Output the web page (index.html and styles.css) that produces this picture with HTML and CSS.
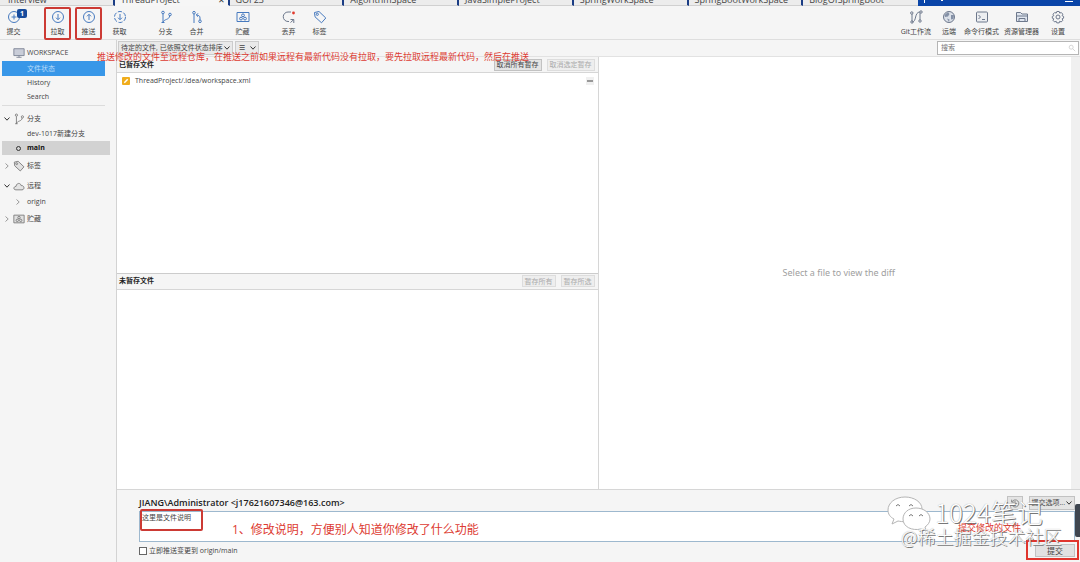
FILE: index.html
```html
<!DOCTYPE html>
<html lang="zh-CN">
<head>
<meta charset="utf-8">
<title>ThreadProject</title>
<link rel="stylesheet" href="styles.css">
</head>
<body>
<svg class="sprite" aria-hidden="true">
  <symbol id="stash" viewBox="0 0 14 12"><path d="M1 1.500h12v9H1z"/><circle cx="7" cy="4.300" r="1.400"/><circle cx="5" cy="7.600" r="1.400"/><circle cx="9" cy="7.600" r="1.400"/></symbol>
  <symbol id="branch" viewBox="0 0 14 14"><circle cx="4" cy="2.500" r="1.300"/><circle cx="11" cy="4.500" r="1.300"/><path d="M4 4v8.500M4 12.500c1-4 6-2 6.700-6.700M2.500 12.500h3"/></symbol>
  <symbol id="tag" viewBox="0 0 14 14"><path d="M1.500 2.500l4.500-1 6.800 6.500-4.300 4.800-6.500-6z"/><circle cx="4.300" cy="4.300" r="1.100"/></symbol>
  <symbol id="chev" viewBox="0 0 8 8"><path d="M1.500 2.500L4 5.200l2.500-2.700"/></symbol>
</svg>

<header>
  <div class="titlebar">
    <nav class="tabs">
      <a class="tab" href="#">Interview</a>
      <a class="tab active" href="#">ThreadProject<span class="close">✕</span></a>
      <a class="tab" href="#">GOF23</a>
      <a class="tab" href="#">AlgorithmSpace</a>
      <a class="tab" href="#">JavaSimpleProject</a>
      <a class="tab" href="#">SpringWorkSpace</a>
      <a class="tab" href="#">SpringBootWorkSpace</a>
      <a class="tab" href="#">BlogOfSpringboot</a>
    </nav>
    <span class="newtab"></span><span class="menumark"></span><span class="minimize"></span>
  </div>
  <div class="toolbar">
    <div class="group">
      <button class="tool first"><svg viewBox="0 0 14 14"><circle cx="7" cy="7" r="5.500"/><path d="M7 4.500v5M4.500 7h5"/></svg>提交<span class="badge">1</span></button>
    </div>
    <div class="group">
      <button class="tool marked"><svg viewBox="0 0 14 14"><circle cx="7" cy="7" r="5.500"/><path d="M7 4v5.500M5 7.700l2 2 2-2"/></svg>拉取</button>
      <button class="tool marked"><svg viewBox="0 0 14 14"><circle cx="7" cy="7" r="5.500"/><path d="M7 10V4.500M5 6.300l2-2 2 2"/></svg>推送</button>
      <button class="tool"><svg viewBox="0 0 14 14"><circle cx="7" cy="7" r="5.500" stroke-dasharray="4.200 1.560"/><path d="M7 4v5.500M5 7.700l2 2 2-2"/></svg>获取</button>
    </div>
    <div class="group">
      <button class="tool"><svg><use href="#branch"/></svg>分支</button>
      <button class="tool"><svg viewBox="0 0 14 14"><circle cx="4" cy="2.700" r="1.300"/><circle cx="10" cy="11.300" r="1.300"/><path d="M4 4v9M10 10V8c0-2-1-2.600-3.500-3M8 3.300L6.300 5 8 6.700"/></svg>合并</button>
    </div>
    <div class="group">
      <button class="tool"><svg><use href="#stash"/></svg>贮藏</button>
    </div>
    <div class="group">
      <button class="tool gray"><svg viewBox="0 0 14 14"><path d="M9 2H6a4.500 4.500 0 0 0 0 9.500h1M11.800 13V9.500H8.500M11.500 9.800L8.500 12.500"/><circle class="reddot" cx="11.500" cy="3" r="1.400"/></svg>丢弃</button>
      <button class="tool"><svg><use href="#tag"/></svg>标签</button>
    </div>
    <div class="group right">
      <button class="tool gray"><svg viewBox="0 0 14 14"><path d="M3 4v7M3 12c5 0 2-10 8-10M11 3v7"/><circle cx="2.800" cy="3" r="1.200"/><circle cx="3" cy="12" r="1.200"/><circle cx="11" cy="11" r="1.200"/><circle cx="12" cy="2" r="1.200"/></svg>Git工作流</button>
      <button class="tool gray"><svg viewBox="0 0 14 14"><circle cx="7" cy="7" r="5.500" fill="#dbe0e8"/><path fill="#8490a6" stroke="none" d="M2.500 5l3.500-3 1.500 2L6 6.500 3 7zM9 5l3 0-.5 4-2.500.5zM5 8.500l2.500 1L7 12z"/></svg>远端</button>
      <button class="tool gray"><svg viewBox="0 0 14 14"><rect x="1.500" y="2" width="11" height="10" rx="1" fill="#eceef1"/><path d="M3.500 5l2 2-2 2M7 9.500h3"/></svg>命令行模式</button>
      <button class="tool gray"><svg viewBox="0 0 14 14"><path fill="#dfe5ef" d="M1.500 2.500h4l1.500 1.500h5.500v7.500h-11z"/><path d="M1.500 6h11M4 11V8.500h6V11"/></svg>资源管理器</button>
      <button class="tool gray"><svg viewBox="0 0 14 14"><circle cx="7" cy="7" r="2"/><path d="M5.800 1.500h2.400l.5 1.600 1.600-.6 1.500 1.700-.7 1.500 1.500.7v1.800l-1.500.6.7 1.500-1.600 1.700-1.500-.7-.5 1.600H5.800l-.6-1.600-1.500.7L2 10.300l.8-1.500-1.500-.6V6.400l1.500-.7L2 4.200l1.700-1.700 1.500.6z"/></svg>设置</button>
    </div>
  </div>
</header>

<div class="workspace">
  <aside class="sidebar">
    <div class="section"><svg class="monitor" viewBox="0 0 14 12"><path fill="#c9cdd8" d="M1 1h12v8H1z"/><path d="M4 11h6M7 9v2"/></svg>WORKSPACE</div>
    <a class="entry selected" href="#">文件状态</a>
    <a class="entry" href="#">History</a>
    <a class="entry" href="#">Search</a>
    <hr>
    <div class="section open"><svg class="chev"><use href="#chev"/></svg><svg><use href="#branch"/></svg>分支</div>
    <a class="entry" href="#">dev-1017新建分支</a>
    <a class="entry current" href="#"><i class="ring"></i>main</a>
    <div class="section tagged"><svg class="chev side"><use href="#chev"/></svg><svg class="shaded"><use href="#tag"/></svg>标签</div>
    <div class="section"><svg class="chev"><use href="#chev"/></svg><svg viewBox="0 0 14 14"><path fill="#e4e4e4" d="M3.500 11.500C0 11.500.5 7.500 3.500 7.500 4 3 9 3 9.500 6.500c4-.500 4.500 5 1 5z"/></svg>远程</div>
    <a class="entry" href="#"><svg class="chev side nested"><use href="#chev"/></svg>origin</a>
    <div class="section last"><svg class="chev side"><use href="#chev"/></svg><svg class="shaded"><use href="#stash"/></svg>贮藏</div>
  </aside>

  <main>
    <div class="filter">
      <button class="combo">待定的文件, 已依照文件状态排序<svg class="chev"><use href="#chev"/></svg></button>
      <button class="combo list">☰<svg class="chev"><use href="#chev"/></svg></button>
      <div class="search"><input type="text" placeholder="搜索" aria-label="搜索"><svg viewBox="0 0 10 10"><circle cx="4" cy="4" r="2.500"/><path d="M6 6l3 3"/></svg></div>
      <p class="note note-top">推送修改的文件至远程仓库，在推送之前如果远程有最新代码没有拉取，要先拉取远程最新代码，然后在推送</p>
    </div>
    <div class="panes">
      <div class="files">
        <section class="pane">
          <div class="head"><h2>已暂存文件</h2><button class="small">取消所有暂存</button><button class="small" disabled>取消选定暂存</button></div>
          <div class="file"><svg viewBox="0 0 8 8"><rect width="8" height="8" rx="1" fill="#f0ad1d" stroke="none"/><path d="M2.300 5.700L5.700 2.300" stroke="#fff" stroke-width="1.500"/></svg><span>ThreadProject/.idea/workspace.xml</span><button class="minus" aria-label="取消暂存"></button></div>
        </section>
        <section class="pane">
          <div class="head"><h2>未暂存文件</h2><button class="small" disabled>暂存所有</button><button class="small" disabled>暂存所选</button></div>
        </section>
      </div>
      <div class="diff"><p>Select a file to view the diff</p></div>
    </div>
    <form class="commit">
      <div class="author"><label for="msg">JIANG\Administrator &lt;j17621607346@163.com&gt;</label>
        <button type="button" class="small history" aria-label="历史"><svg viewBox="0 0 12 12"><path d="M2 2v3h3M2.500 4.500A4.300 4.300 0 1 1 2 7M6 3.500V6.500h2.500"/></svg></button>
        <button type="button" class="small options">提交选项...<svg class="chev"><use href="#chev"/></svg></button>
      </div>
      <div class="message"><textarea id="msg">这里是文件说明</textarea><p class="note note-message">1、修改说明，方便别人知道你修改了什么功能</p></div>
      <div class="bottom"><label class="push"><input type="checkbox">立即推送变更到 origin/main</label><button type="button" class="submit">提交</button></div>
      <i class="widget"></i>
      <div class="watermark">
        <svg viewBox="0 0 44 36"><path d="M18 1C8 1 1 7 1 14c0 4 2 7 6 9l-2 5 6-3c9 2 24 0 24-12C35 6 27 1 18 1z"/><path d="M29 12c-8 0-13 5-13 11 0 8 9 12 18 10l5 2-1-4c3-2 5-5 5-8 0-6-6-11-14-11z"/><path class="eyes" d="M9 10q2-3 4 0M22 10q2-3 4 0M22 20q2-3 4 0M32 20q2-3 4 0"/></svg>
        <p class="brand">1024笔记</p>
        <p class="credit">@稀土掘金技术社区</p>
      </div>
      <p class="note note-commit">提交修改的文件</p>
    </form>
  </main>
</div>
</body>
</html>
```
FILE: styles.css
```css
*, *::before, *::after { box-sizing: border-box; margin: 0; padding: 0; }
body {
  display: flex; flex-direction: column; height: 100vh; overflow: hidden;
  background: #f5f5f5; color: #444;
  font: 7px/10px "Open Sans", "Noto Sans CJK SC", sans-serif;
}
button, input, textarea { font: inherit; color: inherit; }
button { border: 0; background: none; }
a { color: inherit; text-decoration: none; }
svg { fill: none; stroke: #777; stroke-width: 1; flex: none; }
.sprite { position: absolute; width: 0; height: 0; }
header { flex: none; }

.titlebar { display: flex; height: 6px; overflow: hidden; background: #0a45a8; }
.tabs { display: grid; grid-template: 6px / repeat(8, 1fr); align-items: end; width: 85%; }
.tab {
  display: flex; height: 14px; padding: 3px 0 0 6px;
  background: #ececec; border-right: 2px solid #1b3d85; border-bottom: 1px solid #d0d0d0;
  font-size: 9px; line-height: 10px; white-space: nowrap;
}
.tab:first-child { padding-left: 8px; }
.tab.active { background: #f6f6f6; border-bottom-color: #f6f6f6; }
.tab:last-child { border-right: 0; }
.close { margin-left: auto; padding-right: 3px; font-size: 8px; }
.newtab { width: 1px; height: 3px; margin-left: 6px; background: #fff; }
.menumark { width: 2px; height: 1px; margin-left: 16px; background: #fff; }
.minimize { width: 8px; height: 1px; margin: 1px 7px 0 auto; background: #fff; }

.toolbar { display: flex; gap: 15px; height: 34px; padding-right: 7px; border-bottom: 1px solid #dedede; }
.group { display: flex; }
.tool {
  position: relative; display: flex; flex-direction: column; align-items: center; gap: 3px;
  width: 31px; padding-top: 4px; white-space: nowrap;
}
.tool svg { width: 14px; height: 14px; stroke: #477abf; }
.tool.first { width: 27px; }
.tool.gray svg { stroke: #6d788c; }
.tool .reddot { fill: #e23b2e; stroke: none; }
.marked::after { content: ""; position: absolute; inset: 1px 2px -1px; border: 2px solid #cc3a34; border-radius: 2px; }
.badge {
  position: absolute; top: 3px; left: 17px; width: 10px; height: 9px; border-radius: 2px;
  background: #174b9c; color: #fff; font-weight: bold; line-height: 9px; text-align: center;
}
.right { margin-left: auto; gap: 5px; }
.right .tool { width: auto; min-width: 14px; }
.right .tool:nth-child(2) { margin: 0 3px 0 6px; }
.right .tool:last-child { margin: 0 8px 0 7px; }

.workspace { display: flex; flex: 1; min-height: 0; }
.sidebar { flex: none; width: 117px; padding-top: 4px; border-right: 1px solid #d3d3d3; }
.section { display: flex; align-items: center; height: 17px; padding-left: 3px; gap: 2px; }
.section svg { width: 12px; height: 12px; }
.section .chev, .chev { width: 8px; height: 8px; stroke: #333; }
.section .monitor { margin-left: 10px; stroke: #777f91; }
.side { transform: rotate(-90deg); }
.section .side, .side.nested { stroke: #999; }
.shaded { fill: #e1e1e1; }
.entry { position: relative; display: flex; align-items: center; height: 14px; margin: 0 6px 0 2px; padding-left: 25px; }
.selected { height: 15px; margin-right: 11px; background: #3897e8; color: #b9dcfa; }
.current { background: #d2d2d2; color: #111; font-weight: bold; }
.sidebar hr { margin: 1px 11px 4px 2px; border: 0; border-top: 1px solid #dcdcdc; }
.ring { position: absolute; left: 14px; width: 5px; height: 5px; border: 1px solid #333; border-radius: 50%; }
.nested { position: absolute; left: 12px; }
.tagged { height: 22px; }
.tagged ~ .section { height: 18px; }
.tagged ~ .last { height: 20px; }

main { display: flex; flex: 1; flex-direction: column; min-width: 0; }
.filter { position: relative; display: flex; flex: none; gap: 2px; height: 17px; padding: 1px; border-bottom: 1px solid #e2e2e2; }
.combo { display: flex; align-items: center; height: 14px; padding: 0 1px 0 2px; border: 1px solid #ccc; background: #e9e9e9; }
.list { gap: 4px; padding-left: 3px; }
.search { display: flex; align-items: center; width: 142px; margin-left: auto; border: 1px solid #b5b5b5; background: #fff; }
.search input { flex: 1; min-width: 0; padding-left: 3px; border: 0; outline: 0; background: none; }
.search svg { width: 8px; height: 8px; margin-right: 2px; stroke: #ccc; }
.note { position: absolute; color: #dd3b32; white-space: nowrap; }
.note-top { top: 11px; left: -20px; font-size: 9px; line-height: 12px; }

.panes { display: grid; grid-template-columns: 1fr 1fr; flex: 1; min-height: 0; background: #fff; }
.files { display: flex; flex-direction: column; border-right: 1px solid #d6d6d6; }
.pane { flex: 1; }
.pane + .pane { border-top: 1px solid #ccc; }
.head { display: flex; align-items: center; gap: 5px; height: 16px; padding: 0 3px 0 2px; background: #f5f5f5; border-bottom: 1px solid #d6d6d6; }
h2 { flex: 1; color: #222; font-size: 7px; }
.small { height: 12px; padding: 0 2px; border: 1px solid #c2c2c2; background: #e4e4e4; line-height: 9px; }
.small:disabled { border-color: #ddd; background: #eee; color: #aaa; }
.file { display: flex; align-items: center; gap: 5px; height: 16px; padding: 0 4px 0 5px; }
.file > svg { width: 8px; height: 8px; }
.file span { flex: 1; }
.minus { display: grid; place-items: center; width: 8px; height: 8px; background: #f0f0f0; }
.minus::after { content: ""; width: 6px; height: 2px; background: #999; }
.diff { display: grid; place-items: center; border-right: 9px solid #f0f0f0; color: #a0a0a0; font-family: "Noto Sans", sans-serif; font-size: 9px; line-height: 12px; }
.diff p { padding-left: 8px; }

.commit { position: relative; flex: none; padding: 4px 5px 3px 22px; border-top: 1px solid #d6d6d6; background: #f5f5f5; }
.author { display: flex; align-items: center; height: 17px; gap: 6px; }
.author label { flex: 1; color: #222; font-size: 9px; font-weight: 600; }
.author .small { display: flex; align-items: center; height: 14px; }
.history svg { width: 10px; height: 10px; }
.author .options { padding: 0 1px; }
.message { position: relative; height: 31px; }
.message textarea { display: block; width: 100%; height: 100%; padding: 1px 2px; border: 1px solid #9db8ce; outline: 0; background: #fff; resize: none; }
.message::after { content: ""; position: absolute; top: -2px; left: 1px; width: 63px; height: 22px; border: 2px solid #cc3a34; border-radius: 2px; }
.note-message { top: 10px; left: 93px; font-size: 12px; line-height: 18px; }
.bottom { display: flex; align-items: center; justify-content: space-between; height: 17px; }
.push { display: flex; align-items: center; gap: 2px; }
.push input { width: 8px; height: 8px; appearance: none; border: 1px solid #666; background: #fff; }
.submit { position: relative; width: 40px; height: 13px; border: 1px solid #c2c2c2; background: #e1e1e1; line-height: 10px; font-size: 8px; }
.submit::after { content: ""; position: absolute; inset: -5px -5px -4px -10px; border: 2px solid #e0352d; }
.widget { position: absolute; top: 14px; right: 0; width: 5px; height: 33px; border-radius: 2px 0 0 2px; background: #3f4650; }
.note-commit { right: 59px; top: 32px; font-size: 9px; line-height: 12px; }
.watermark { position: absolute; top: 6px; right: 17px; width: 162px; color: #fff; text-shadow: 1px 1px 0 #777, 0 0 1px #999; pointer-events: none; }
.watermark svg { position: absolute; top: 0; left: -14px; width: 44px; height: 36px; fill: #fff; stroke: #b5b5b5; }
.watermark .eyes { stroke: #777; }
.brand { position: relative; padding-left: 34px; font-size: 26px; font-weight: 300; line-height: 32px; font-family: "Noto Sans CJK SC", sans-serif; }
.credit { position: relative; margin-top: -2px; font-size: 18px; font-weight: 300; line-height: 20px; white-space: nowrap; font-family: "Noto Sans CJK SC", sans-serif; }
```
